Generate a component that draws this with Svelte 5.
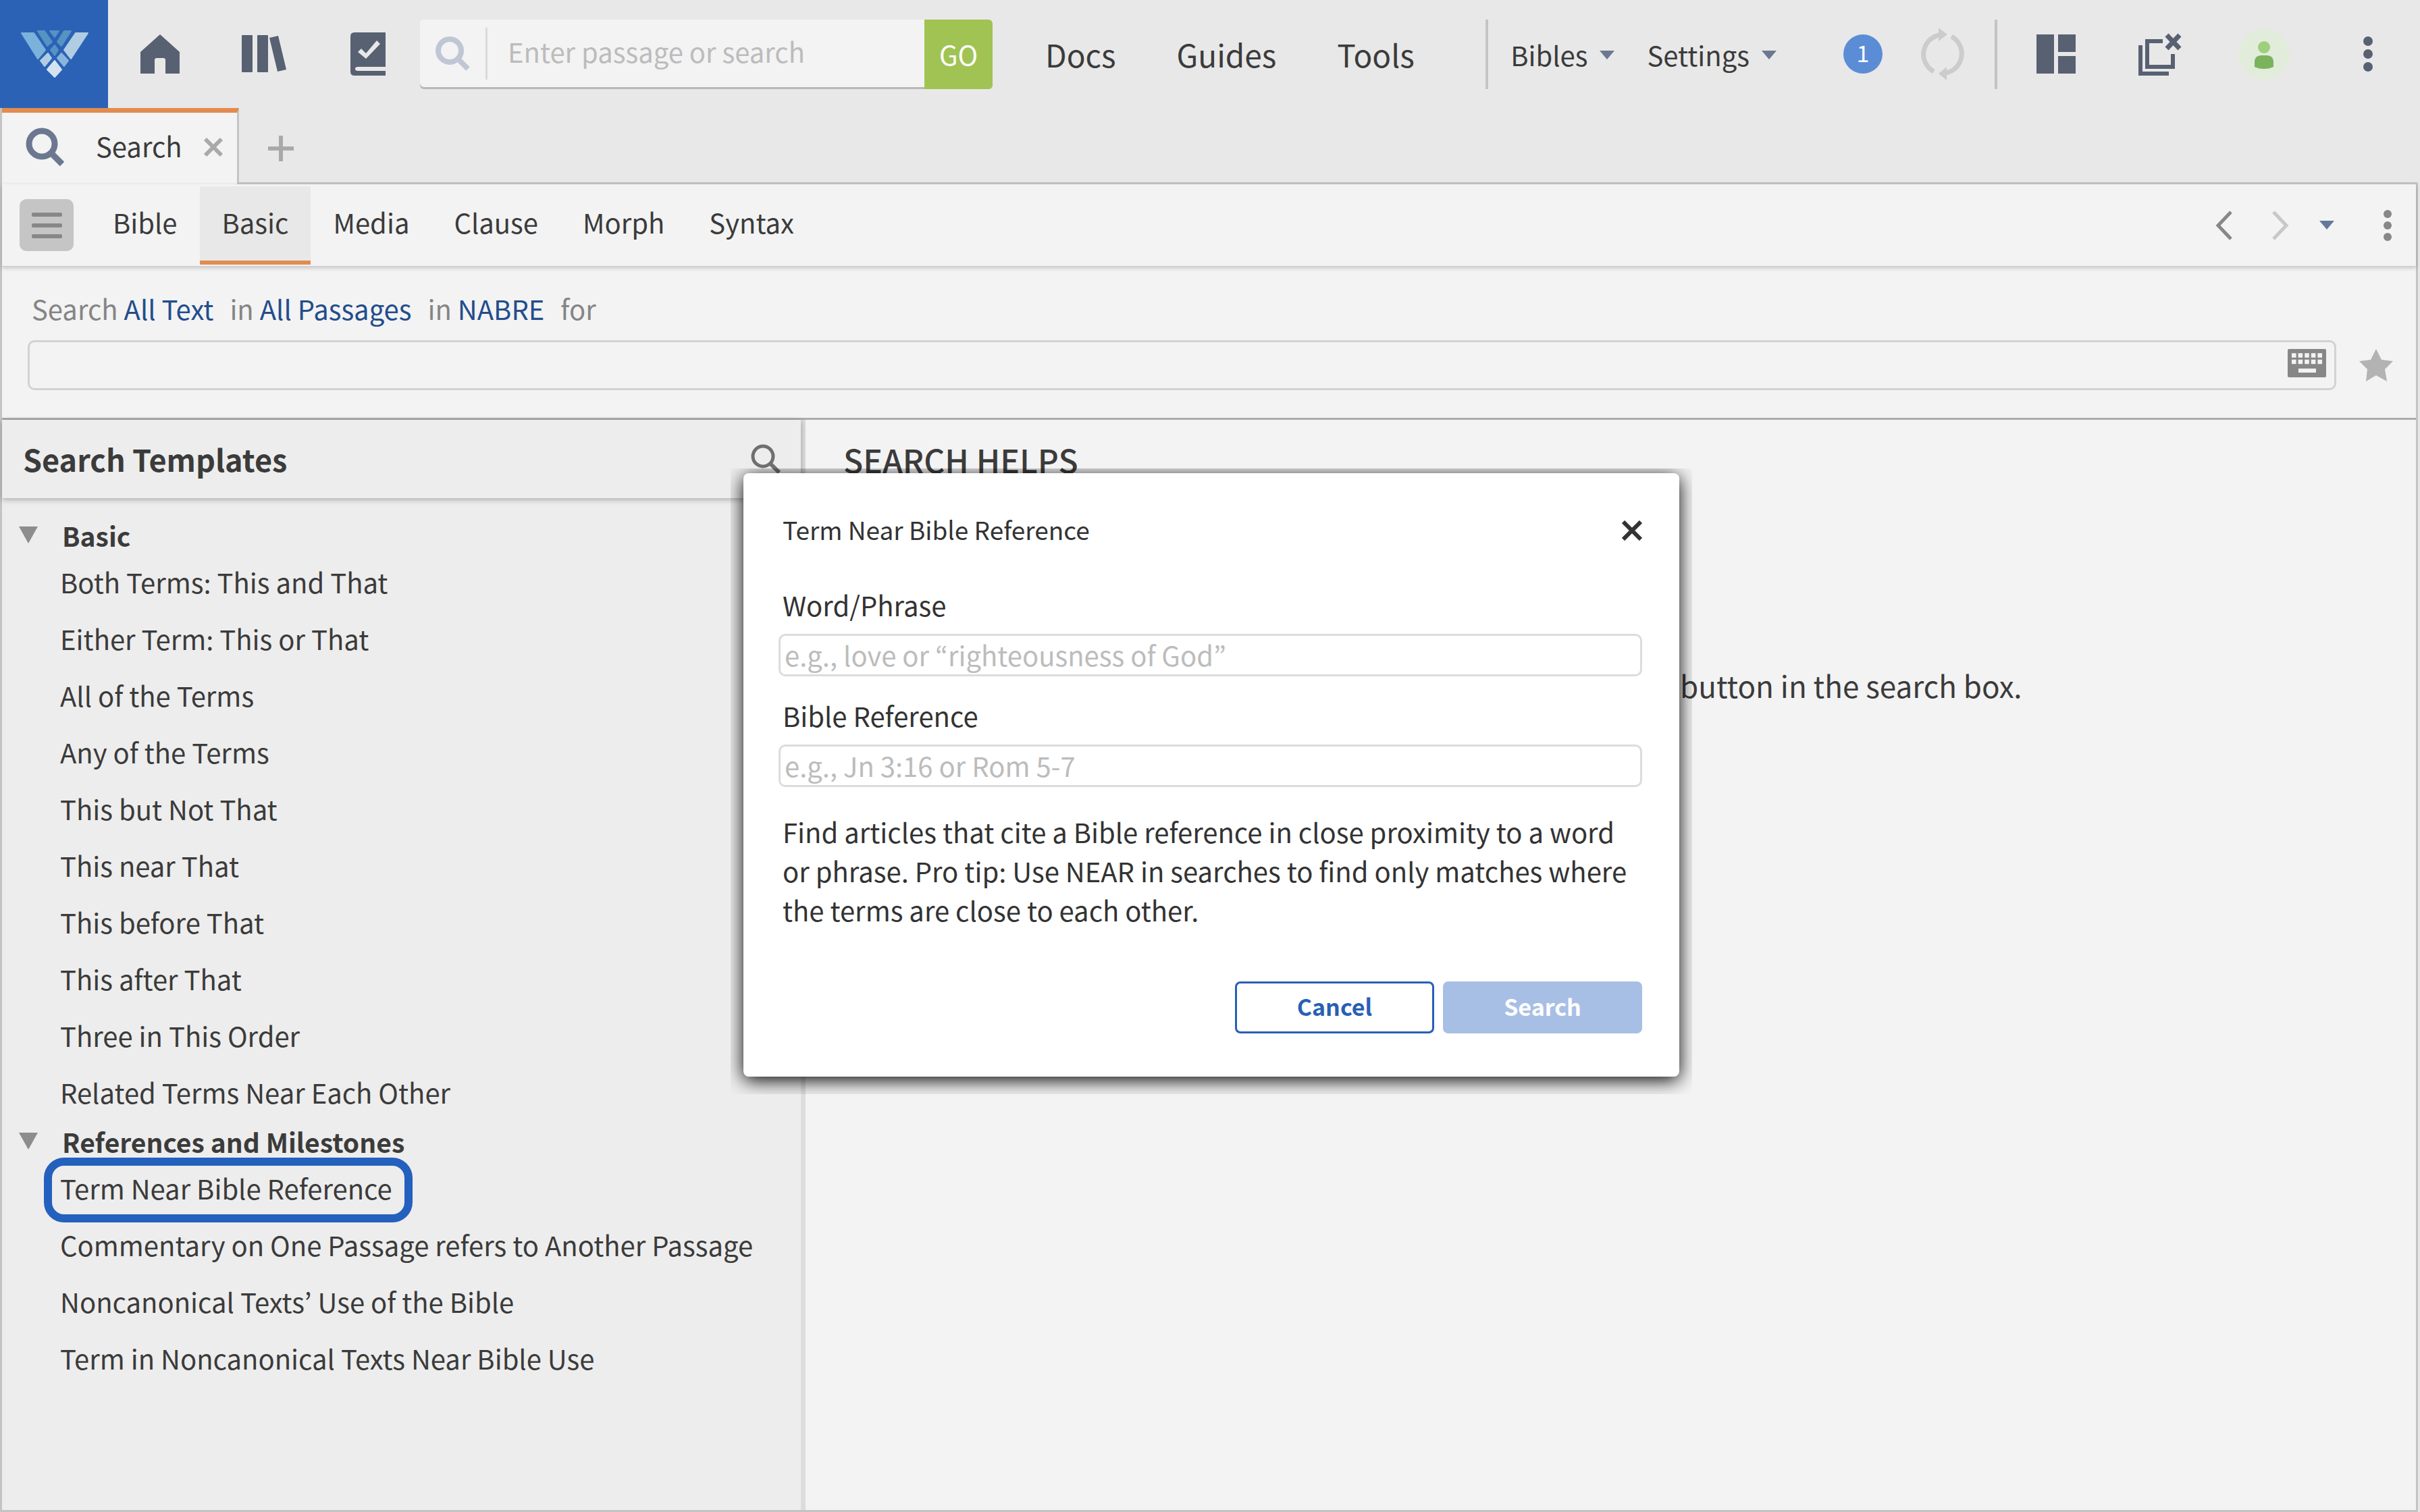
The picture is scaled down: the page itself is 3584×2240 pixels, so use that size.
<script>
	const toolTabs = ['Bible', 'Basic', 'Media', 'Clause', 'Morph', 'Syntax'];
	let activeTab = 'Basic';

	const groups = [
		{
			name: 'Basic',
			items: [
				'Both Terms: This and That',
				'Either Term: This or That',
				'All of the Terms',
				'Any of the Terms',
				'This but Not That',
				'This near That',
				'This before That',
				'This after That',
				'Three in This Order',
				'Related Terms Near Each Other'
			]
		},
		{
			name: 'References and Milestones',
			items: [
				'Term Near Bible Reference',
				'Commentary on One Passage refers to Another Passage',
				'Noncanonical Texts’ Use of the Bible',
				'Term in Noncanonical Texts Near Bible Use'
			]
		}
	];
	let selected = 'Term Near Bible Reference';

	let passage = '';
	let query = '';
	let phrase = '';
	let reference = '';
	let showDialog = true;
</script>

<div class="app">
	<header class="topbar">
		<a class="logo" href="#home" aria-label="Verbum">
			<svg width="160" height="160" viewBox="0 0 160 160" stroke-width="2" stroke-linejoin="round">
				<path d="M32 49H50L67 74L56 87Z" fill="#7ab2db" stroke="#7ab2db" />
				<path d="M130 49H112L95 74L105 87Z" fill="#b0cde2" stroke="#b0cde2" />
				<path d="M56 46H66L77 62L70 68Z" fill="#5593c2" stroke="#5593c2" />
				<path d="M105 46H95L85 62L91 68Z" fill="#5593c2" stroke="#5593c2" />
				<path d="M74 46H87L81 55Z" fill="#5593c2" stroke="#5593c2" />
				<path d="M81 67L86 74L81 82L75 74Z" fill="#5593c2" stroke="#5593c2" />
				<path d="M71 79L76 86L66 98L60 90Z" fill="#b0cde2" stroke="#b0cde2" />
				<path d="M91 79L101 90L95 98L85 86Z" fill="#8ab5da" stroke="#8ab5da" />
				<path d="M81 90L91 103L81 114L70 103Z" fill="#d5e3f0" stroke="#d5e3f0" />
			</svg>
		</a>
		<button class="cell" aria-label="Home">
			<svg width="58" height="58" viewBox="0 0 58 58" fill="#586172">
				<path d="M29 0L58 26V58H37V38Q37 35 34 35H24Q21 35 21 38V58H0V26Z" />
			</svg>
		</button>
		<button class="cell" aria-label="Library">
			<svg width="66" height="56" viewBox="0 0 66 56" fill="#586172">
				<rect y="0" width="16" height="55" rx="1" />
				<rect x="23" y="0" width="16" height="55" rx="1" />
				<path d="M41 4L54 1L66 51L53 54Z" />
			</svg>
		</button>
		<button class="cell" aria-label="Courses">
			<svg width="52" height="64" viewBox="0 0 52 64">
				<path d="M6 0H52V51H11Q7 51 7 54T11 57H52V64H6Q0 64 0 58V6Q0 0 6 0Z" fill="#586172" />
				<path d="M11 29L16 24L23 31L39 12L44 17L23 39Z" fill="#e8e8e8" />
			</svg>
		</button>
		<form class="go-box">
			<span class="go-icon">
				<svg width="51" height="51" viewBox="0 0 51 51" fill="none" stroke="#c0c6d5">
					<circle cx="21" cy="21" r="17" stroke-width="8" />
					<path d="M34 34L48 48" stroke-width="8" />
				</svg>
			</span>
			<input type="text" placeholder="Enter passage or search" aria-label="Enter passage or search" bind:value={passage} />
			<button type="button">GO</button>
		</form>
		<nav class="main-nav">
			<a href="#docs">Docs</a>
			<a href="#guides">Guides</a>
			<a href="#tools">Tools</a>
		</nav>
		<div class="quick">
			<span class="divider"></span>
			<div class="menus">
				<button>Bibles <svg width="22" height="13" viewBox="0 0 22 13"><path d="M0 0H22L11 13Z" fill="#6b7890" /></svg></button>
				<button>Settings <svg width="22" height="13" viewBox="0 0 22 13"><path d="M0 0H22L11 13Z" fill="#6b7890" /></svg></button>
			</div>
			<button class="cell small" aria-label="1 notification"><span class="badge">1</span></button>
			<button class="cell small" aria-label="Sync">
				<svg width="66" height="78" viewBox="0 0 66 78" fill="none" stroke="#cccccc" stroke-width="7">
					<path d="M20 65A29 29 0 0 1 28 11" />
					<path d="M46 13A29 29 0 0 1 38 67" />
					<path d="M27 0L40 10L27 20Z" fill="#cccccc" stroke="none" />
					<path d="M39 58L27 68L39 78Z" fill="#cccccc" stroke="none" />
				</svg>
			</button>
			<span class="divider end"></span>
			<button class="cell" aria-label="Layouts">
				<svg width="58" height="58" viewBox="0 0 58 58" fill="#586172">
					<rect width="26" height="58" />
					<rect x="32" width="26" height="26" />
					<rect x="32" y="32" width="26" height="26" />
				</svg>
			</button>
			<button class="cell" aria-label="Close all">
				<svg width="64" height="63" viewBox="0 0 64 63" fill="none" stroke="#586172" stroke-width="6">
					<path d="M36 12H13V50H51V31" />
					<path d="M3 18V60H45" />
					<path d="M42 3L61 23M61 3L42 23" stroke-width="7" />
				</svg>
			</button>
			<button class="cell" aria-label="Account">
				<svg width="76" height="76" viewBox="0 0 76 76">
					<circle cx="38" cy="38" r="38" fill="#e2ecdb" />
					<circle cx="38" cy="28" r="9" fill="#9ecf7c" />
					<path d="M24 50Q24 40 34 40H42Q52 40 52 50V57Q46 60 38 60T24 57Z" fill="#7bb25b" />
				</svg>
			</button>
			<button class="cell" aria-label="More">
				<svg width="14" height="52" viewBox="0 0 14 52" fill="#586172">
					<circle cx="7" cy="7" r="7" /><circle cx="7" cy="26" r="7" /><circle cx="7" cy="45" r="7" />
				</svg>
			</button>
		</div>
	</header>

	<div class="tab-row">
		<div class="tab">
			<svg width="58" height="58" viewBox="0 0 58 58" fill="none" stroke="#6b7890">
				<circle cx="24" cy="24" r="19" stroke-width="9" />
				<path d="M38 38L54 54" stroke-width="9" />
			</svg>
			<span>Search</span>
			<button aria-label="Close tab">
				<svg width="30" height="30" viewBox="0 0 30 30"><path d="M3 3L27 27M27 3L3 27" stroke="#a9a9a9" stroke-width="6" /></svg>
			</button>
		</div>
		<div class="tab-rest">
			<button aria-label="New tab">
				<svg width="38" height="38" viewBox="0 0 38 38"><path d="M19 0V38M0 19H38" stroke="#a9a9a9" stroke-width="6" /></svg>
			</button>
		</div>
	</div>

	<div class="panel">
		<div class="toolbar">
			<button class="burger" aria-label="Panel menu">
				<svg width="45" height="40" viewBox="0 0 45 40" fill="#878787">
					<rect y="1" width="45" height="6" rx="2" /><rect y="17" width="45" height="6" rx="2" /><rect y="33" width="45" height="6" rx="2" />
				</svg>
			</button>
			<nav class="tool-tabs">
				{#each toolTabs as tab}
					<button class:active={tab === activeTab} on:click={() => (activeTab = tab)}>{tab}</button>
				{/each}
			</nav>
			<div class="history">
				<button aria-label="Back">
					<svg width="26" height="44" viewBox="0 0 26 44" fill="none"><path d="M23 2L4 22L23 42" stroke="#878787" stroke-width="5" /></svg>
				</button>
				<button aria-label="Forward">
					<svg width="26" height="44" viewBox="0 0 26 44" fill="none"><path d="M3 2L22 22L3 42" stroke="#c8c8c8" stroke-width="5" /></svg>
				</button>
				<button aria-label="History">
					<svg width="22" height="13" viewBox="0 0 22 13"><path d="M0 0H22L11 13Z" fill="#64789a" /></svg>
				</button>
				<button class="kebab" aria-label="More options">
					<svg width="12" height="46" viewBox="0 0 12 46" fill="#878787">
						<circle cx="6" cy="6" r="6" /><circle cx="6" cy="23" r="6" /><circle cx="6" cy="40" r="6" />
					</svg>
				</button>
			</div>
		</div>

		<section class="query">
			<p class="scope">
				<span>Search <a href="#text">All Text</a></span>
				<span>in <a href="#passages">All Passages</a></span>
				<span>in <a href="#nabre">NABRE</a></span>
				<span>for</span>
			</p>
			<div class="query-row">
				<div class="query-box">
					<input type="text" aria-label="Search query" bind:value={query} />
					<button aria-label="Keyboard">
						<svg width="57" height="42" viewBox="0 0 57 42">
							<rect width="57" height="42" rx="2" fill="#878787" />
							<path
								d="M6 9.5H51M6 19H51"
								stroke="#f3f3f3"
								stroke-width="6.5"
								stroke-dasharray="6.6 3"
							/>
							<rect x="16" y="29" width="26" height="6" fill="#f3f3f3" />
						</svg>
					</button>
				</div>
				<button aria-label="Add to favorites">
					<svg width="50" height="48" viewBox="0 0 50 48" fill="#b3b3b3">
						<path d="M25 0L33 16L50 18L38 30L41 48L25 39L10 48L12 30L0 18L17 16Z" />
					</svg>
				</button>
			</div>
		</section>

		<div class="body">
			<aside class="templates">
				<div class="templates-head">
					<h2>Search Templates</h2>
					<button aria-label="Filter templates">
						<svg width="44" height="44" viewBox="0 0 44 44" fill="none" stroke="#6f6f6f">
							<circle cx="18" cy="18" r="15" stroke-width="5" />
							<path d="M29 29L42 42" stroke-width="6" />
						</svg>
					</button>
				</div>
				<div class="groups">
					{#each groups as group}
						<h3>
							<svg width="28" height="25" viewBox="0 0 28 25"><path d="M0 0H28L14 25Z" fill="#8d8d8d" /></svg>
							{group.name}
						</h3>
						<ul>
							{#each group.items as item}
								<li><a href="#template" class:selected={item === selected}>{item}</a></li>
							{/each}
						</ul>
					{/each}
				</div>
			</aside>
			<main>
				<h1>SEARCH HELPS</h1>
				<p>button in the search box.</p>
			</main>
		</div>
	</div>

	{#if showDialog}
		<div class="dialog-frame">
			<div class="dialog" role="dialog" aria-labelledby="dialog-title">
				<div class="dialog-head">
					<h2 id="dialog-title">Term Near Bible Reference</h2>
					<button aria-label="Close" on:click={() => (showDialog = false)}>
						<svg width="30" height="30" viewBox="0 0 30 30"><path d="M2 2L28 28M28 2L2 28" stroke="#333333" stroke-width="6" /></svg>
					</button>
				</div>
				<div class="field">
					<label for="phrase">Word/Phrase</label>
					<input id="phrase" type="text" placeholder="e.g., love or “righteousness of God”" bind:value={phrase} />
				</div>
				<div class="field">
					<label for="reference">Bible Reference</label>
					<input id="reference" type="text" placeholder="e.g., Jn 3:16 or Rom 5-7" bind:value={reference} />
				</div>
				<p class="hint">
					Find articles that cite a Bible reference in close proximity to a word or phrase. Pro tip: Use NEAR in
					searches to find only matches where the terms are close to each other.
				</p>
				<div class="actions">
					<button class="cancel" on:click={() => (showDialog = false)}>Cancel</button>
					<button class="submit" disabled>Search</button>
				</div>
			</div>
		</div>
	{/if}
</div>

<style>
	:global(body) {
		margin: 0;
		background: #e8e8e8;
	}

	.app {
		position: relative;
		display: flex;
		flex-direction: column;
		min-height: 100vh;
		box-sizing: border-box;
		font-family: 'Noto Sans CJK KR', 'Noto Sans', sans-serif;
		font-size: 40px;
		line-height: 56px;
		color: #3b3b3b;
	}

	.app :global(svg) {
		display: block;
		flex: none;
	}

	button,
	input {
		font: inherit;
		color: inherit;
		background: none;
		border: none;
		padding: 0;
		margin: 0;
		box-sizing: border-box;
		outline: none;
	}

	button {
		cursor: pointer;
	}

	h1,
	h2,
	h3,
	p,
	ul {
		margin: 0;
		padding: 0;
	}

	a {
		color: inherit;
		text-decoration: none;
	}

	input::placeholder {
		color: #bcbcbc;
		opacity: 1;
	}

	/* Top bar */
	.topbar {
		display: flex;
		align-items: center;
		height: 160px;
	}

	.logo {
		background: #2b62b6;
	}

	.cell {
		display: flex;
		align-items: center;
		justify-content: center;
		width: 154px;
		height: 160px;
		flex: none;
	}

	.cell.small {
		width: 118px;
	}

	.go-box {
		display: flex;
		flex: 0 1 848px;
		height: 103px;
		background: #f3f3f3;
		border-radius: 6px;
		overflow: hidden;
		box-shadow: inset 0 -3px #b8b8b8;
	}

	.go-icon {
		display: flex;
		align-items: center;
		justify-content: center;
		width: 97px;
		height: 77px;
		margin-top: 12px;
		border-right: 3px solid #dadada;
	}

	.go-box input {
		flex: 1;
		min-width: 0;
		padding: 0 0 8px 30px;
	}

	.go-box button {
		width: 101px;
		background: #a1c354;
		color: #ffffff;
	}

	.main-nav {
		display: flex;
		padding-left: 33px;
		font-size: 46px;
	}

	.main-nav a {
		padding: 0 45px;
	}

	.quick {
		display: flex;
		align-items: center;
		margin-left: auto;
	}

	.divider {
		width: 4px;
		height: 103px;
		background: #c4c4c4;
	}

	.divider.end {
		margin: 0 10px 0 18px;
	}

	.menus {
		display: flex;
		gap: 48px;
		padding: 2px 69px 0 33px;
	}

	.menus button {
		display: flex;
		align-items: center;
		gap: 18px;
	}

	.badge {
		width: 58px;
		height: 58px;
		border-radius: 50%;
		background: #5b8dd6;
		color: #ffffff;
		font-size: 34px;
		line-height: 54px;
	}

	/* Document tabs */
	.tab-row {
		display: flex;
		height: 113px;
		border-left: 3px solid #c4c4c4;
	}

	.tab {
		display: flex;
		align-items: center;
		padding: 0 20px 4px 35px;
		border-top: 7px solid #e38b4f;
		border-right: 3px solid #c4c4c4;
		background: #f3f3f3;
	}

	.tab span {
		padding-bottom: 4px;
		margin: 0 31px 0 46px;
	}

	.tab-rest {
		display: flex;
		flex: 1;
		align-items: center;
		padding: 9px 0 0 43px;
		margin-right: 3px;
		border-bottom: 3px solid #c4c4c4;
	}

	/* Panel */
	.panel {
		display: flex;
		flex: 1;
		flex-direction: column;
		margin-right: 3px;
		border: 3px solid #c4c4c4;
		border-top: none;
		background: #f3f3f3;
	}

	.toolbar {
		display: flex;
		align-items: center;
		height: 122px;
		padding-left: 26px;
		position: relative;
		border-bottom: 1px solid #cccccc;
		box-sizing: border-box;
		box-shadow: 0 2px 6px rgba(0, 0, 0, 0.2);
	}

	.burger {
		display: flex;
		align-items: center;
		justify-content: center;
		width: 80px;
		height: 77px;
		border-radius: 10px;
		background: #c5c5c5;
	}

	.tool-tabs {
		display: flex;
		margin-left: 25px;
	}

	.tool-tabs button {
		height: 116px;
		padding: 0 33px 4px;
		border-bottom: 6px solid transparent;
	}

	.tool-tabs button.active {
		background: #e8e8e8;
		border-bottom-color: #e38b4f;
	}

	.history {
		display: flex;
		align-items: center;
		gap: 57px;
		margin-left: auto;
		padding-right: 36px;
	}

	.history button:nth-child(3) {
		margin-left: -12px;
	}

	.kebab {
		margin-left: 16px;
	}

	.query {
		padding: 34px 34px 41px 38px;
		border-bottom: 3px solid #acacac;
	}

	.scope {
		display: flex;
		gap: 24px;
		padding-left: 6px;
		color: #858585;
	}

	.scope a {
		color: #234d8c;
	}

	.query-row {
		display: flex;
		align-items: center;
		gap: 34px;
		margin-top: 19px;
	}

	.query-box {
		display: flex;
		flex: 1;
		align-items: center;
		height: 74px;
		padding: 0 12px 6px 10px;
		border: 3px solid #d2d2d2;
		border-radius: 10px;
		box-sizing: border-box;
	}

	.query-box input {
		flex: 1;
	}

	.body {
		display: flex;
		flex: 1;
	}

	/* Templates sidebar */
	.templates {
		width: 1190px;
		flex: none;
		box-sizing: border-box;
		border-right: 7px solid #dcdcdc;
		background: #ededed;
	}

	.templates-head {
		display: flex;
		align-items: center;
		justify-content: space-between;
		height: 116px;
		padding: 0 30px 0 31px;
		box-shadow: 0 2px 8px rgba(0, 0, 0, 0.3);
	}

	.templates-head h2 {
		font-size: 45px;
	}

	.groups {
		padding-top: 27px;
	}

	.groups h3 {
		display: flex;
		align-items: center;
		gap: 36px;
		height: 58px;
		padding: 0 0 3px 25px;
		box-sizing: border-box;
		font-size: 39px;
	}

	.groups ul {
		list-style: none;
	}

	.groups li {
		display: flex;
		align-items: center;
		height: 84px;
		padding-left: 74px;
	}

	.groups li a {
		padding: 5px 18px 11px 12px;
		border-radius: 18px;
	}

	.groups li a.selected {
		outline: 12px solid #2460bd;
	}

	main {
		flex: 1;
		padding: 22px 56px;
	}

	main h1 {
		font-size: 48px;
		font-weight: 500;
		line-height: 72px;
	}

	main p {
		margin-top: 271px;
		padding-left: 1239px;
		font-size: 44px;
	}

	/* Dialog */
	.dialog-frame {
		position: absolute;
		top: 694px;
		left: 50%;
		width: 1424px;
		margin-left: -710px;
		padding: 7px 19px 26px;
		box-sizing: border-box;
		overflow: hidden;
	}

	.dialog {
		padding: 55px 55px 64px 52px;
		border-radius: 8px;
		background: #ffffff;
		color: #333333;
		box-shadow: 0 5px 28px #000000;
	}

	.dialog-head {
		display: flex;
		align-items: center;
		justify-content: space-between;
		padding-left: 6px;
		margin-bottom: 56px;
	}

	.dialog-head button {
		padding-top: 4px;
	}

	.dialog-head h2 {
		font-size: 37px;
		font-weight: 400;
	}

	.field {
		margin-bottom: 30px;
	}

	.field label {
		display: block;
		padding-left: 6px;
		margin-bottom: 15px;
	}

	.field input {
		display: block;
		width: 100%;
		height: 63px;
		padding: 0 6px 2px;
		border: 3px solid #dcdcdc;
		border-radius: 10px;
	}

	.hint {
		padding: 7px 0 0 6px;
		line-height: 58px;
	}

	.actions {
		display: flex;
		justify-content: flex-end;
		gap: 13px;
		margin-top: 77px;
		font-size: 34px;
		font-weight: 700;
	}

	.actions button {
		width: 295px;
		height: 77px;
		padding-bottom: 4px;
		border-radius: 8px;
	}

	.cancel {
		border: 3px solid #285fb6;
		color: #285fb6;
	}

	.submit {
		background: #a8bfe5;
		color: #ffffff;
	}
</style>
